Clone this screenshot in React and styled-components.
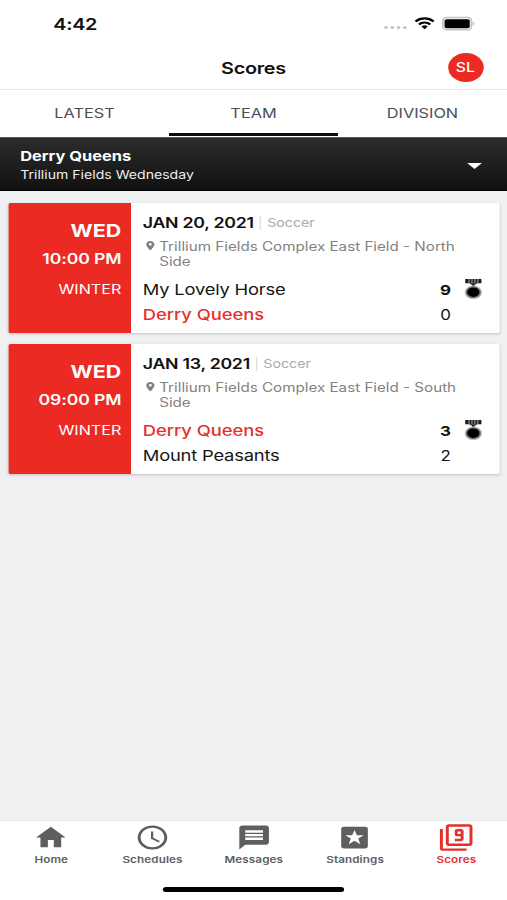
import React from 'react';
import styled, { createGlobalStyle } from 'styled-components';
import { MdHome, MdAccessTime, MdMessage, MdFilter9, MdPlace } from 'react-icons/md';

const STRETCH = 507 / 414;

const GlobalStyle = createGlobalStyle`
  * { box-sizing: border-box; }
  html, body { margin: 0; padding: 0; overflow: hidden; background: #fff; }
  body { width: 507px; height: 900px; }
`;

/* The 414pt-wide phone layout, widened to fill the window. */
const Screen = styled.div`
  width: 414px;
  height: 900px;
  transform: scaleX(${STRETCH});
  transform-origin: 0 0;
  display: flex;
  flex-direction: column;
  overflow: hidden;
  background: #eef0f2;
  font-family: Inter, "Liberation Sans", sans-serif;
  color: #111;
`;

const Label = styled.span`
  display: block;
  white-space: nowrap;
  font-size: ${(p) => p.$size}px;
  font-weight: ${(p) => p.$weight || 400};
  letter-spacing: ${(p) => p.$track || 0}px;
  line-height: ${(p) => p.$line || 20}px;
  color: ${(p) => p.$color || 'inherit'};
`;

const StatusBar = styled.header`
  flex: none;
  height: 46px;
  padding: 14.4px 26px 11.6px 43.5px;
  display: flex;
  justify-content: space-between;
  background: #fff;
`;

const StatusIcons = styled.svg`
  display: block;
  width: 76px;
  height: 20px;
`;

const TitleBar = styled.div`
  flex: none;
  height: 44px;
  padding: 0 19.5px;
  display: grid;
  grid-template-columns: 29px 1fr 29px;
  align-items: center;
  justify-items: center;
  background: #fff;
  border-bottom: 1px solid #e6e6e6;
`;

const Avatar = styled.div`
  width: 29px;
  height: 29px;
  grid-column: 3;
  border-radius: 50%;
  display: grid;
  place-items: center;
  background: #ec2a24;
  color: #fff;
`;

const TitleSlot = styled.h1`
  margin: 0;
  grid-column: 2;
`;

const Segments = styled.nav`
  flex: none;
  height: 47px;
  display: grid;
  grid-template-columns: repeat(3, 1fr);
  background: #fff;
`;

const Segment = styled.button`
  border: 0;
  border-bottom: 3px solid ${(p) => (p.$active ? '#0c0c0c' : 'transparent')};
  margin: 0 0 1.5px;
  padding: 3px 0 0;
  background: none;
  font: inherit;
  display: grid;
  place-items: center;
  color: #4b4f55;
`;

const TeamPicker = styled.section`
  flex: none;
  height: 54px;
  padding: 3px 20px 0 16.5px;
  display: flex;
  align-items: center;
  justify-content: space-between;
  background: linear-gradient(#2c2c2c, #111);
  border-top: 1px solid #565656;
  border-bottom: 1px solid #000;
  color: #fff;
`;

const Caret = styled.svg`
  display: block;
  width: 13px;
  height: 6px;
`;

const GameList = styled.main`
  flex: 1;
  padding: 12.3px 6.1px 0 6.5px;
  display: flex;
  flex-direction: column;
  gap: 11.3px;
`;

const Card = styled.article`
  height: 129.7px;
  display: grid;
  grid-template-columns: 100.4px 1fr;
  background: #fff;
  border-radius: 1.5px;
  box-shadow: 0 1px 2.5px rgba(0, 0, 0, 0.2);
`;

const DateBlock = styled.div`
  padding: 17.3px 7.8px 0 0;
  display: flex;
  flex-direction: column;
  align-items: flex-end;
  background: #ec2a24;
  color: #fff;
  border-radius: 1.5px 0 0 1.5px;
`;

const Season = styled.div`
  margin-top: 3.3px;
`;

const Details = styled.div`
  padding: 9.3px 14px 0 9.7px;
`;

const DateLine = styled.div`
  display: flex;
  align-items: center;
  height: 20px;
`;

const Divider = styled.i`
  width: 1px;
  height: 14px;
  margin: 0 5px 0 5px;
  background: #dcdcdc;
`;

const Place = styled.div`
  display: flex;
  gap: 1.9px;
  height: 32px;
  margin: 6px 0 7px;

  svg {
    flex: none;
    width: 11.5px;
    height: 11.5px;
    margin-top: 1.5px;
    color: #808080;
  }
`;

const TeamRow = styled.div`
  display: grid;
  grid-template-columns: 1fr 20px 28px;
  align-items: center;
  height: 25px;
`;

const Score = styled.div`
  display: flex;
  justify-content: flex-end;
  margin-right: -2.3px;
`;

const MedalIcon = styled.svg`
  justify-self: end;
  display: block;
  width: 15px;
  height: 22px;
`;

const TabBar = styled.footer`
  flex: none;
  height: 80px;
  padding-left: 0.5px;
  background: #fff;
  display: grid;
  grid-template-columns: repeat(5, 1fr);
  grid-template-rows: 66px 5px;
  border-top: 1px solid #e9e9ea;
`;

const Tab = styled.a`
  padding-top: 2.2px;
  display: flex;
  flex-direction: column;
  align-items: center;
  gap: 2.2px;
  color: ${(p) => (p.$active ? '#e4302b' : '#5c5e5f')};

  svg {
    display: block;
    width: 29px;
    height: 29px;
  }
`;

const HomeIndicator = styled.div`
  grid-column: 1 / -1;
  justify-self: center;
  width: 148px;
  height: 5px;
  border-radius: 3px;
  background: #000;
`;

function Medal() {
  return (
    <MedalIcon viewBox="0 0.8 15 22">
      <path d="M.9.8h13.2v4.2H.9z" fill="#1a1a1a" />
      <path d="M4 .8v4.4M6.4.8v4.4M8.8.8v4.4M11.2.8v4.4" stroke="#c4c4c4" strokeWidth=".8" />
      <path d="M4 5h7L8.4 6.8v2H6.6v-2z" fill="#222" />
      <ellipse cx="7.5" cy="14.2" rx="7.1" ry="6.9" fill="#c4c4c4" />
      <ellipse cx="7.5" cy="14.1" rx="6.2" ry="6" fill="#777" />
      <ellipse cx="7.5" cy="14" rx="5" ry="4.8" fill="#000" />
    </MedalIcon>
  );
}

function StarBox() {
  return (
    <svg viewBox="0 0 24 24">
      <path
        fill="currentColor"
        fillRule="evenodd"
        d="M5 3h14a2 2 0 0 1 2 2v14a2 2 0 0 1-2 2H5a2 2 0 0 1-2-2V5a2 2 0 0 1 2-2zm7 2.8-1.6 4.3H5.8l3.7 2.8-1.4 4.6 3.9-2.8 3.9 2.8-1.4-4.6 3.7-2.8h-4.6z"
      />
    </svg>
  );
}

const games = [
  {
    time: '10:00 PM', date: 'JAN 20, 2021', side: 'North',
    teams: [['My Lovely Horse', 9, true, false], ['Derry Queens', 0, false, true]],
  },
  {
    time: '09:00 PM', date: 'JAN 13, 2021', side: 'South',
    teams: [['Derry Queens', 3, true, true], ['Mount Peasants', 2, false, false]],
  },
];

const tabs = [
  ['Home', MdHome], ['Schedules', MdAccessTime], ['Messages', MdMessage],
  ['Standings', StarBox], ['Scores', MdFilter9],
];

function Game({ game }) {
  return (
    <Card>
      <DateBlock>
        <Label $size={17.5} $weight={700}>WED</Label>
        <Label $size={14.4} $weight={600} $line={35} $track={-0.1}>{game.time}</Label>
        <Season><Label $size={13.2}>WINTER</Label></Season>
      </DateBlock>
      <Details>
        <DateLine>
          <Label $size={14.5} $weight={600} $track={-0.22}>{game.date}</Label>
          <Divider />
          <Label $size={11.6} $color="#aaa">Soccer</Label>
        </DateLine>
        <Place>
          <MdPlace />
          <Label $size={12.4} $line={15.7} $color="#828282">
            Trillium Fields Complex East Field - {game.side}<br />Side
          </Label>
        </Place>
        {game.teams.map(([name, score, won, mine]) => (
          <TeamRow key={name}>
            <Label
              $size={15}
              $weight={mine ? 500 : 400}
              $track={mine ? -0.05 : -0.17}
              $color={mine ? '#e4302b' : '#161616'}
            >
              {name}
            </Label>
            <Score><Label $size={13.8} $weight={won ? 700 : 400}>{score}</Label></Score>
            {won && <Medal />}
          </TeamRow>
        ))}
      </Details>
    </Card>
  );
}

export default function App() {
  return (
    <>
      <GlobalStyle />
      <Screen>
        <StatusBar>
          <Label $size={16.2} $weight={600} $track={-0.25}>4:42</Label>
          <StatusIcons viewBox="0 0 76 20">
            <g fill="#c4c4c4">
              <circle cx="3.2" cy="13.6" r="1.5" /><circle cx="8.3" cy="13.6" r="1.5" />
              <circle cx="13.4" cy="13.6" r="1.5" /><circle cx="18.5" cy="13.6" r="1.5" />
            </g>
            <g fill="none" stroke="#000" strokeWidth="2.1">
              <path d="M27.3 7.5a10.4 10.4 0 0 1 14.8 0" />
              <path d="M30.1 10.5a6.3 6.3 0 0 1 9.2 0" />
            </g>
            <path d="M32.1 12.5a3.8 3.8 0 0 1 5.2 0l-2.6 2.8z" fill="#000" />
            <rect x="49.6" y="3.6" width="23.4" height="12.2" rx="3.3" fill="none" stroke="#c2c2c2" strokeWidth="1.5" />
            <rect x="51" y="5.2" width="20.6" height="9" rx="1.6" fill="#000" />
            <path d="M74.2 7.8c1.6.6 1.6 3.2 0 3.8z" fill="#bdbdbd" />
          </StatusIcons>
        </StatusBar>
        <TitleBar>
          <TitleSlot><Label $size={16.2} $weight={600} $track={-0.25}>Scores</Label></TitleSlot>
          <Avatar><Label $size={12.8} $weight={500}>SL</Label></Avatar>
        </TitleBar>
        <Segments>
          {['LATEST', 'TEAM', 'DIVISION'].map((name) => (
            <Segment key={name} $active={name === 'TEAM'}><Label $size={13.3}>{name}</Label></Segment>
          ))}
        </Segments>
        <TeamPicker>
          <div>
            <Label $size={13.4} $weight={700} $line={20}>Derry Queens</Label>
            <Label $size={11.5} $line={19} $color="#eee">Trillium Fields Wednesday</Label>
          </div>
          <Caret viewBox="0 0 13 6"><path d="M.5 0h12l-6 6z" fill="#fff" /></Caret>
        </TeamPicker>
        <GameList>
          {games.map((game) => <Game key={game.date} game={game} />)}
        </GameList>
        <TabBar>
          {tabs.map(([name, Icon]) => (
            <Tab key={name} $active={name === 'Scores'}>
              <Icon />
              <Label $size={9.5} $weight={600} $line={12} $track={0.1}>{name}</Label>
            </Tab>
          ))}
          <HomeIndicator />
        </TabBar>
      </Screen>
    </>
  );
}
